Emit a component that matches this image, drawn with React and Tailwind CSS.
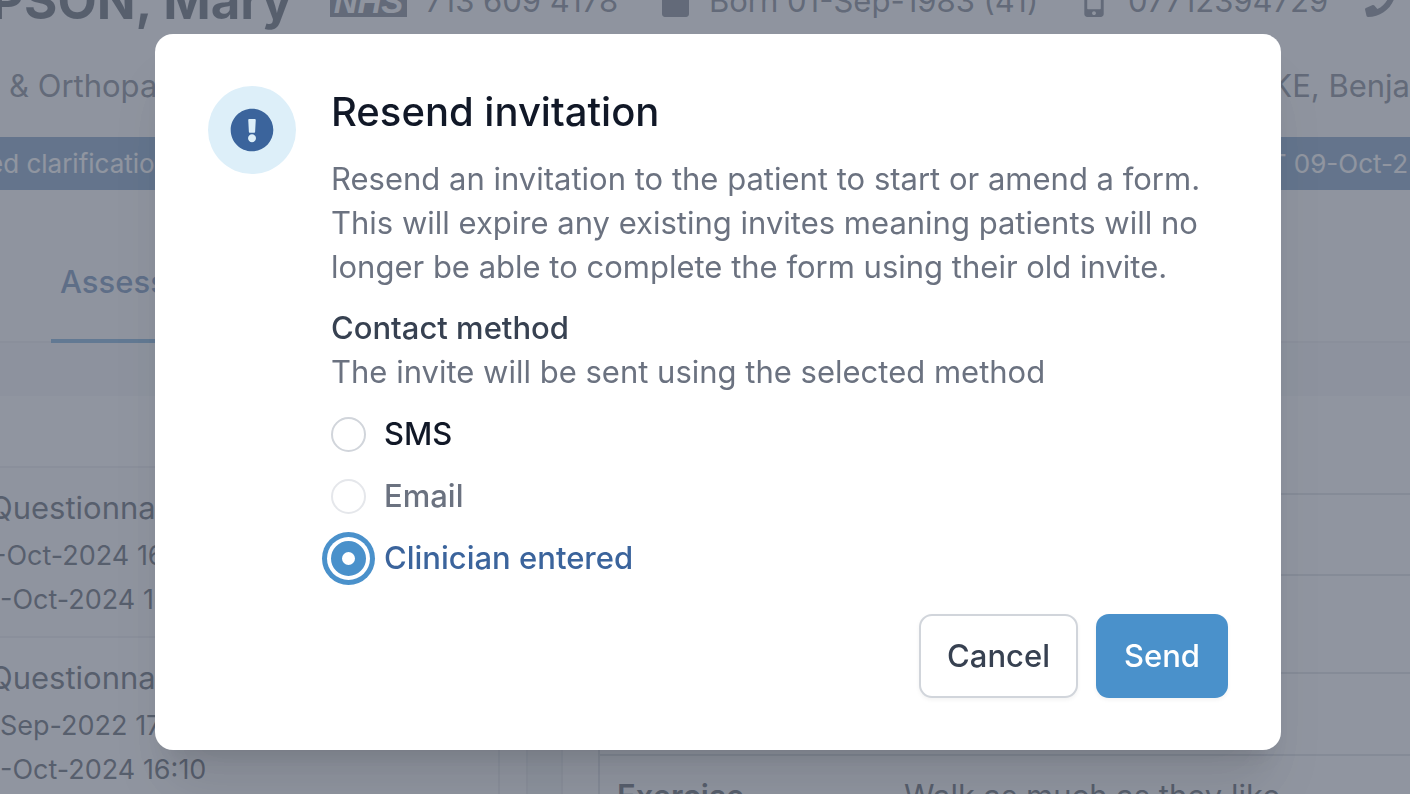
import { useState } from 'react';
import { FaCalendar, FaExclamationCircle, FaMobileAlt, FaPhone } from 'react-icons/fa';

const methods = [
  { id: 'sms', label: 'SMS' },
  { id: 'email', label: 'Email', disabled: true },
  { id: 'clinician', label: 'Clinician entered' },
];

const questionnaires = [
  { id: 1, name: 'Questionna', sent: '-Oct-2024 16', completed: '-Oct-2024 16:10' },
  { id: 2, name: 'Questionna', sent: 'Sep-2022 17', completed: '-Oct-2024 16:10' },
];

function PatientHeader() {
  return (
    <header>
      <div className="-mt-6 flex h-[50px] items-center whitespace-nowrap text-[31px] text-[#4b5563]">
        <h1 className="-ml-[9px] w-[339px] shrink-0 text-[51px] font-bold text-[#1f2937]">PSON, Mary</h1>
        <span className="flex h-[32px] w-[77px] shrink-0 items-center justify-center bg-[#4b5563] font-['Liberation_Sans',sans-serif] text-[33px] font-bold italic leading-none text-[#f9fafb]">
          NHS
        </span>
        <span className="ml-[18px] w-[237px] shrink-0">713 609 4178</span>
        <FaCalendar className="h-[31px] w-[27px] shrink-0" />
        <span className="ml-[20px] w-[375px] shrink-0">Born 01-Sep-1983 (41)</span>
        <FaMobileAlt className="h-[31px] w-[20px] shrink-0" />
        <span className="ml-[24px] w-[237px] shrink-0">07712394729</span>
        <FaPhone className="h-[31px] w-[31px] shrink-0" />
      </div>
      <div className="flex h-[111px] items-center justify-between whitespace-nowrap pl-[9px] pt-[10px] text-[31px] text-[#4b5563]">
        <span>&amp; Orthopa</span>
        <span>KE, Benja</span>
      </div>
      <div className="flex h-[53px] items-center justify-between whitespace-nowrap bg-[#4f7eb0] pr-[2px] text-[26px] text-white">
        <span className="-ml-[12px]">ed clarificatio</span>
        <span>T 09-Oct-2</span>
      </div>
    </header>
  );
}

function PageContent() {
  return (
    <div className="h-screen overflow-hidden bg-[#f9fafb]">
      <PatientHeader />
      <nav className="mt-[34px] flex border-b-2 border-[#e5e7eb] pl-[51px]">
        <a
          href="#assessments"
          className="-mb-[2px] flex h-[119px] items-center border-b-4 border-[#4a91cb] px-[9px] pt-[2px] text-[31px] font-medium text-[#3b649c]"
        >
          Assess
        </a>
      </nav>
      <div className="flex h-[493px] bg-[#f3f4f6] pt-[53px]">
        <section className="w-[500px] shrink-0 border-r-2 border-[#e5e7eb] bg-white">
          <div className="h-[70px]" />
          <ul>
            {questionnaires.map((q) => (
              <li
                key={q.id}
                className="whitespace-nowrap border-t-2 border-[#e5e7eb] pb-[14px] pt-[18px] text-[27px] leading-[44px] text-[#1f2937] odd:bg-[#f9fafb]"
              >
                <p className="-ml-[11px] mb-[4px] text-[31px]">{q.name}</p>
                <p className={q.id === 1 ? '-ml-[6px]' : ''}>{q.sent}</p>
                <p>{q.completed}</p>
              </li>
            ))}
          </ul>
        </section>
        <div className="w-[26px] shrink-0 bg-white" />
        <div className="w-[37px] shrink-0 border-x-2 border-[#e5e7eb] bg-[#f3f4f6]" />
        <section className="flex-1 bg-white pl-[35px]">
          <div className="h-full border-l-2 border-[#d1d5db]">
            <div className="h-[97px]" />
            <div className="h-[81px] border-t-2 border-[#d1d5db]" />
            <div className="h-[98px] border-t-2 border-[#d1d5db]" />
            <div className="h-[82px] border-t-2 border-[#d1d5db]" />
            <dl className="flex h-[82px] items-center border-t-2 border-[#d1d5db] pl-[17px] text-[31px] text-[#1f2937]">
              <dt className="w-[287px] font-semibold">Exercise</dt>
              <dd>Walk as much as they like</dd>
            </dl>
          </div>
        </section>
      </div>
    </div>
  );
}

function ResendDialog() {
  const [method, setMethod] = useState('clinician');

  return (
    <div className="fixed inset-0 flex items-start justify-center bg-[#6b7280]/75 pl-[26px] pt-[34px]">
      <div
        role="dialog"
        aria-modal="true"
        aria-labelledby="resend-title"
        className="flex w-full max-w-[1126px] flex-col rounded-[18px] bg-white px-[53px] py-[52px] shadow-[0_44px_55px_-11px_rgba(0,0,0,0.1),0_18px_22px_-13px_rgba(0,0,0,0.1)]"
      >
        <div className="flex items-start gap-[35px]">
          <div className="flex h-[88px] w-[88px] shrink-0 items-center justify-center rounded-full bg-[#ddeff9]">
            <FaExclamationCircle className="h-[44px] w-[44px] text-[#3b649c]" />
          </div>
          <div className="flex-1 text-[31px] leading-[44px] text-[#6b7280]">
            <h2 id="resend-title" className="text-[40px] font-medium leading-[52px] text-[#111827]">
              Resend invitation
            </h2>
            <p className="mt-[19px]">
              Resend an invitation to the patient to start or amend a form. This will expire any existing invites
              meaning patients will no longer be able to complete the form using their old invite.
            </p>
            <fieldset className="mt-[17px]">
              <legend className="font-medium text-[#374151]">Contact method</legend>
              <p>The invite will be sent using the selected method</p>
              <div className="mt-[18px] flex flex-col gap-[18px]">
                {methods.map((m) => (
                  <div key={m.id} className="flex items-center gap-[18px]">
                    <input
                      id={m.id}
                      type="radio"
                      name="contact-method"
                      checked={method === m.id}
                      disabled={m.disabled}
                      onChange={() => setMethod(m.id)}
                      className="peer h-[35px] w-[35px] shrink-0 appearance-none rounded-full border-2 border-[#d1d5db] bg-white checked:border-[11px] checked:border-[#4a91cb] checked:shadow-[0_0_0_4px_#fff,0_0_0_9px_#4a91cb] disabled:border-[#e5e7eb]"
                    />
                    <label
                      htmlFor={m.id}
                      className="font-medium text-[#111827] peer-checked:text-[#3b649c] peer-disabled:text-[#6b7280]"
                    >
                      {m.label}
                    </label>
                  </div>
                ))}
              </div>
            </fieldset>
          </div>
        </div>
        <div className="mt-[34px] flex justify-end gap-[18px]">
          <button
            type="button"
            className="h-[84px] rounded-[13px] border-2 border-[#d1d5db] bg-white px-[26px] text-[31px] font-medium text-[#374151] shadow-[0_2px_4px_rgba(0,0,0,0.05)]"
          >
            Cancel
          </button>
          <button
            type="button"
            className="h-[84px] rounded-[13px] bg-[#4a91cb] px-[28px] text-[31px] font-medium text-white shadow-[0_2px_4px_rgba(0,0,0,0.05)]"
          >
            Send
          </button>
        </div>
      </div>
    </div>
  );
}

export default function App() {
  return (
    <div className="font-['Inter',sans-serif]">
      <PageContent />
      <ResendDialog />
    </div>
  );
}
